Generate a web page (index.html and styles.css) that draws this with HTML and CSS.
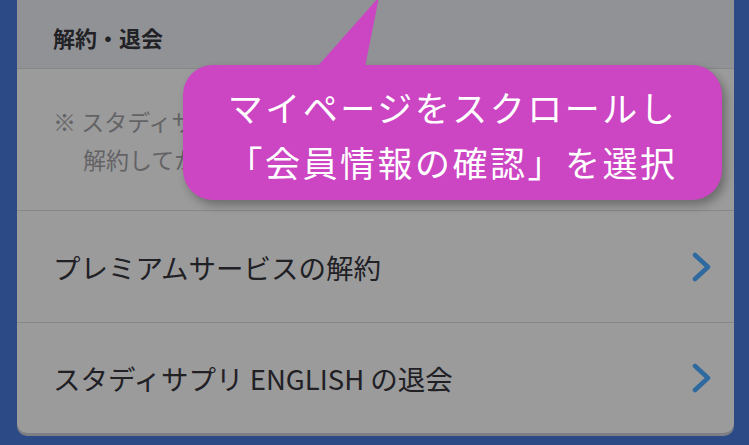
FILE: index.html
```html
<!DOCTYPE html>
<html lang="ja">
<head>
    <meta charset="UTF-8">
    <meta name="viewport" content="width=device-width, initial-scale=1.0">
    <title>解約・退会</title>
    <link rel="stylesheet" href="styles.css">
</head>
<body>
    <div class="card">
        <div class="section-head">解約・退会</div>

        <div class="note">
            <p>※ スタディサプリの有料プランをご利用中の方は</p>
            <p>解約してから退会してください。</p>
        </div>

        <a class="row" href="#">
            <span>プレミアムサービスの解約</span>
            <svg class="chev" width="20" height="30" viewBox="0 0 20 30"><path d="M3 3 L16 15 L3 27" /></svg>
        </a>
        <a class="row" href="#">
            <span>スタディサプリ ENGLISH の退会</span>
            <svg class="chev" width="20" height="30" viewBox="0 0 20 30"><path d="M3 3 L16 15 L3 27" /></svg>
        </a>
    </div>

    <div class="bubble">
        <svg class="tail" width="80" height="70" viewBox="0 0 80 70"><polygon points="0,70 62,0 48,70" /></svg>
        <p>マイページをスクロールし</p>
        <p>「会員情報の確認」を選択</p>
    </div>
</body>
</html>
```

FILE: styles.css
```css
body { margin: 0; background: #2c4b86; font-family: "Noto Sans CJK JP", "Noto Sans", sans-serif; height: 445px; overflow: hidden; position: relative; }
.card { margin: 0 15px 0 17px; background: #9b9b9b; border-radius: 0 0 10px 10px; box-shadow: 0 3px 0 #7e7f84; overflow: hidden; }
.section-head { height: 69px; box-sizing: border-box; padding: 24px 36px 0; background: #919296; border-bottom: 1px solid #87878a; font-size: 22px; font-weight: bold; line-height: 26px; color: #222226; }
.note { padding: 33px 24px 32px 66px; border-bottom: 1px solid #87878a; font-size: 23px; line-height: 38px; color: #636366; }
.note p { margin: 0; text-indent: -30px; white-space: nowrap; }
.note p + p { text-indent: 0; }
.row { display: flex; align-items: center; justify-content: space-between; height: 111px; padding: 0 22px 0 36px; color: #202025; text-decoration: none; font-size: 27.5px; }
.row + .row { border-top: 1px solid #87878a; height: 110px; }
.chev path { fill: none; stroke: #2e6a9f; stroke-width: 4.5; stroke-linecap: round; stroke-linejoin: round; }
.bubble { position: absolute; left: 183px; top: 65px; width: 539px; height: 135px; box-sizing: border-box; padding-top: 14px; background: #cc45c3; border-radius: 30px; box-shadow: 4px 5px 10px rgba(0, 0, 0, 0.3); color: #fff; text-align: center; font-size: 35px; line-height: 55px; letter-spacing: 2.5px; }
.bubble p { margin: 0; }
.tail { position: absolute; left: 134px; top: -68px; }
.tail polygon { fill: #cc45c3; }
```
